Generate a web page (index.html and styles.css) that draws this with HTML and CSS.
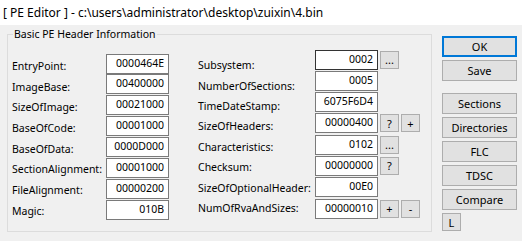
FILE: index.html
```html
<!DOCTYPE html>
<html lang="en">
<head>
    <meta charset="UTF-8">
    <title>[ PE Editor ]</title>
    <link rel="stylesheet" href="styles.css">
</head>
<body>
    <div class="titlebar">[ PE Editor ] - c:\users\administrator\desktop\zuixin\4.bin</div>

    <div class="main">
        <fieldset class="group">
            <legend>Basic PE Header Information</legend>
            <div class="form">
                <div class="labels labels-left">
                    <div>EntryPoint:</div>
                    <div>ImageBase:</div>
                    <div>SizeOfImage:</div>
                    <div>BaseOfCode:</div>
                    <div>BaseOfData:</div>
                    <div>SectionAlignment:</div>
                    <div>FileAlignment:</div>
                    <div>Magic:</div>
                </div>
                <div class="fields fields-left">
                    <div class="field"><div class="edit">0000464E</div></div>
                    <div class="field"><div class="edit">00400000</div></div>
                    <div class="field"><div class="edit">00021000</div></div>
                    <div class="field"><div class="edit">00001000</div></div>
                    <div class="field"><div class="edit">0000D000</div></div>
                    <div class="field"><div class="edit">00001000</div></div>
                    <div class="field"><div class="edit">00000200</div></div>
                    <div class="field"><div class="edit">010B</div></div>
                </div>
                <div class="labels labels-right">
                    <div>Subsystem:</div>
                    <div>NumberOfSections:</div>
                    <div>TimeDateStamp:</div>
                    <div>SizeOfHeaders:</div>
                    <div>Characteristics:</div>
                    <div>Checksum:</div>
                    <div>SizeOfOptionalHeader:</div>
                    <div>NumOfRvaAndSizes:</div>
                </div>
                <div class="fields fields-right">
                    <div class="field"><div class="edit hot">0002</div><button class="mini">...</button></div>
                    <div class="field"><div class="edit">0005</div></div>
                    <div class="field"><div class="edit">6075F6D4</div></div>
                    <div class="field"><div class="edit">00000400</div><button class="mini">?</button><button class="mini">+</button></div>
                    <div class="field"><div class="edit">0102</div><button class="mini">...</button></div>
                    <div class="field"><div class="edit">00000000</div><button class="mini">?</button></div>
                    <div class="field"><div class="edit">00E0</div></div>
                    <div class="field"><div class="edit">00000010</div><button class="mini">+</button><button class="mini">-</button></div>
                </div>
            </div>
        </fieldset>

        <div class="actions">
            <button class="btn default">OK</button>
            <button class="btn">Save</button>
            <button class="btn spaced">Sections</button>
            <button class="btn">Directories</button>
            <button class="btn">FLC</button>
            <button class="btn">TDSC</button>
            <button class="btn">Compare</button>
            <button class="btn small">L</button>
        </div>
    </div>
</body>
</html>
```

FILE: styles.css
```css
* {
    box-sizing: border-box;
}
body {
    margin: 0;
    width: 522px;
    height: 241px;
    overflow: hidden;
    background: #f0f0f0;
    font-family: "Noto Sans", "Open Sans", sans-serif;
    font-size: 10.5px;
    color: #000;
}
.titlebar {
    height: 25px;
    line-height: 25px;
    padding-left: 3px;
    background: #fff;
    font-size: 12px;
    white-space: nowrap;
}
.main {
    display: flex;
    padding: 2px 0 0 7px;
}
.group {
    margin: 0;
    padding: 0;
    width: 425px;
    height: 205px;
    border: 1px solid #dcdcdc;
}
.group legend {
    margin-left: 5px;
    padding: 0 1px;
    line-height: 15px;
}
.form {
    display: flex;
}
.labels {
    display: grid;
    grid-auto-rows: 20.7px;
    line-height: 20.7px;
    white-space: nowrap;
}
.labels-left {
    width: 94px;
    margin: 14px 0 0 4px;
}
.labels-right {
    width: 117px;
    margin: 13.2px 0 0 29px;
    grid-auto-rows: 20.4px;
    line-height: 20.4px;
}
.fields {
    display: grid;
}
.fields-left {
    margin-top: 11.5px;
    grid-auto-rows: 20.9px;
}
.fields-right {
    margin-top: 7.5px;
    grid-auto-rows: 21.3px;
}
.field {
    display: flex;
    align-items: flex-start;
    gap: 2px;
}
.edit {
    width: 63px;
    height: 20px;
    line-height: 17px;
    padding-right: 4px;
    text-align: right;
    background: #fff;
    border: 1px solid #7a7a7a;
}
.edit.hot {
    border-color: #333;
}
button {
    font-family: inherit;
    font-size: inherit;
    color: #000;
    background: #e1e1e1;
    border: 1px solid #adadad;
    padding: 0;
    margin: 0;
}
.mini {
    width: 19px;
    height: 18px;
    margin-top: 1px;
    line-height: 15px;
    font-size: 11px;
}
.actions {
    display: flex;
    flex-direction: column;
    gap: 3px;
    width: 75px;
    margin: 9px 0 0 10px;
}
.btn {
    height: 21px;
    line-height: 18px;
    font-size: 11px;
}
.btn.default {
    border: 2px solid #0078d7;
}
.btn.spaced {
    margin-top: 9px;
}
.btn.small {
    width: 19px;
    height: 18px;
    line-height: 15px;
}
```
